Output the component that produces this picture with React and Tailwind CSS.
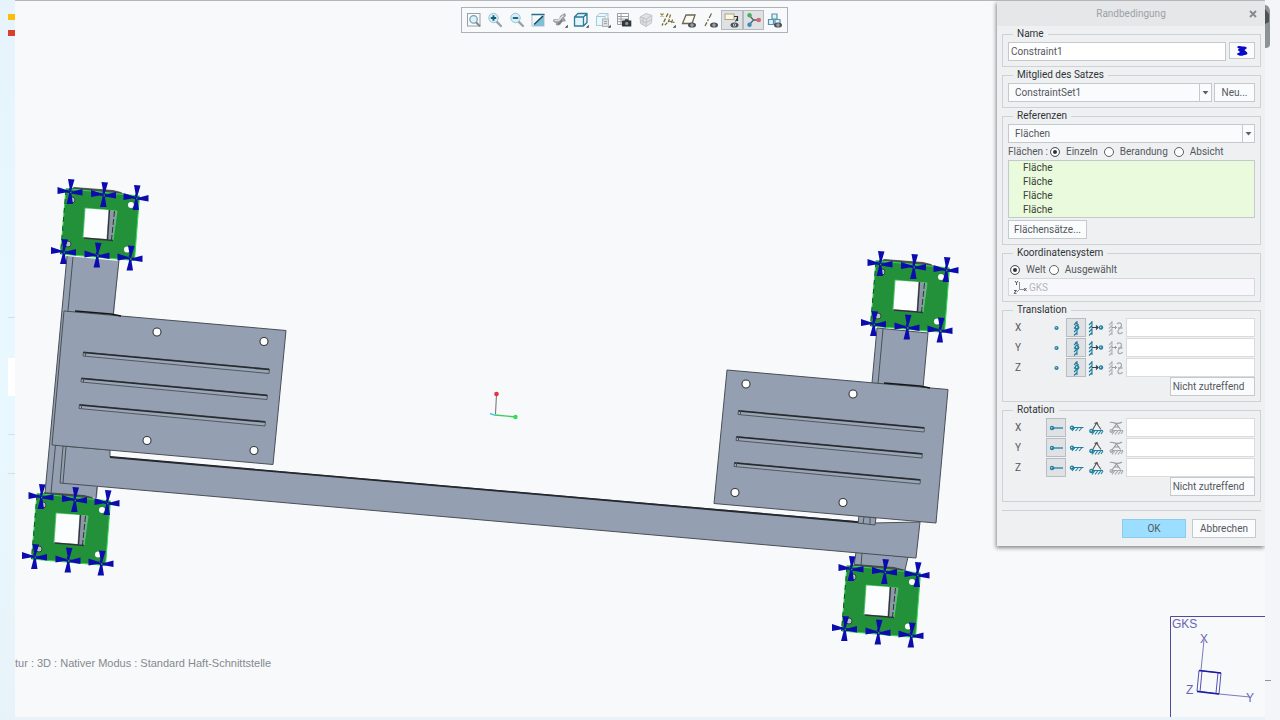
import React from "react";

const TEAL = "#1f7f9f";
const STEEL = "#5b6b78";

/* ---------- toolbar icons (16x16) ---------- */

const Eye = ({ x = 7, y = 10 }) => (
  <g transform={`translate(${x} ${y})`}>
    <ellipse cx="4" cy="3" rx="4" ry="2.6" fill="#4a5055" />
    <circle cx="4" cy="3" r="1.5" fill="#dfe5ea" />
    <circle cx="4" cy="3" r="0.7" fill="#222" />
  </g>
);

const Lens = ({ children }) => (
  <>
    <path d="M9.6 9.6 L14 14" stroke="#9aa3a8" strokeWidth="2.4" strokeLinecap="round" />
    <circle cx="6.5" cy="6" r="4.7" fill="#d9eff8" stroke="#9cc3d2" strokeWidth="1" />
    {children}
  </>
);

const TOOLS = [
  {
    name: "Refit",
    art: (
      <>
        <rect x="1.5" y="1.5" width="12.5" height="12.5" fill="#fafbfc" stroke="#9a9fa4" />
        <path d="M9.8 10 L14 14.4" stroke="#7d878d" strokeWidth="2" />
        <circle cx="7.6" cy="7.4" r="3.7" fill="#dff1f8" stroke="#6f9fb3" strokeWidth="1.2" />
      </>
    ),
  },
  {
    name: "Zoom in",
    art: (
      <Lens>
        <path d="M3.8 6H9.2M6.5 3.3V8.7" stroke="#14607f" strokeWidth="1.9" />
      </Lens>
    ),
  },
  {
    name: "Zoom out",
    art: (
      <Lens>
        <path d="M3.8 6H9.2" stroke="#14607f" strokeWidth="1.9" />
      </Lens>
    ),
  },
  {
    name: "Repaint",
    art: (
      <>
        <rect x="2" y="2.5" width="12" height="11.5" fill="#f4fbfd" stroke="#a5c6d3" />
        <path d="M14 3.5 V14 H3 Z" fill="#7fc0d8" />
        <path d="M1.500 2.500H14.500" stroke="#2b6d88" strokeWidth="1.500" />
        <path d="M4 12.500 L13 4" stroke="#1b4456" strokeWidth="1.500" />
      </>
    ),
  },
  {
    name: "Rendering options",
    more: true,
    art: (
      <>
        <path
          d="M1 8 C2.500 6.200 5 7.500 6.500 7 C8 6.500 7.300 4.300 9 3.200 L13 1 L14 4 L12 5.500 L14 9 C12 9.800 10.800 9.200 10 10.300 C8.800 12.800 6.500 14.300 4.500 13.300 C3 12.500 4.700 11 3.300 10.700 C2 10.500 1 9.800 1 8 Z"
          fill="#9a9ea1"
        />
        <path d="M2.500 8.300 C4.500 8.800 7.500 9 8.800 6 L11.500 3.500" stroke="#dfe1e3" strokeWidth="1.500" fill="none" />
        <path d="M6 12.500 C8 11.500 8.500 9.500 10 8.500" stroke="#707579" strokeWidth="1.300" fill="none" />
      </>
    ),
  },
  {
    name: "Display style",
    more: true,
    art: (
      <path
        d="M1.500 5 H10.500 V14 H1.500 Z M1.500 5 L5 1.500 H14 L10.500 5 M14 1.500 V10.500 L10.500 14"
        fill="#e3f4fb"
        stroke="#2c7c99"
        strokeWidth="1.300"
        strokeLinejoin="round"
      />
    ),
  },
  {
    name: "Saved orientations",
    more: true,
    art: (
      <>
        <path d="M1.500 4.500 H10 V13.500 H1.500 Z M1.500 4.500 L4.500 1.500 H13 L10 4.500 M13 1.500 V8" fill="#edf8fc" stroke="#9fcbdc" />
        <rect x="7.500" y="7" width="6" height="7.500" fill="#dcdfe1" stroke="#b0b4b8" />
        <path d="M9 9.500H12M9 11.500H12" stroke="#a3a8ac" />
      </>
    ),
  },
  {
    name: "View manager",
    art: (
      <>
        <path d="M1.500 1.500 H12.500 V12.500 H1.500 Z M1.500 4.500H12.500M1.500 7H12.500M1.500 9.700H12.500M5 1.500V12.500" fill="#fff" stroke="#9a9fa3" />
        <path d="M6 8.500H8.500L9.300 7.300H12L12.800 8.500H15.300V14.500H6Z" fill="#33383c" />
        <circle cx="10.700" cy="11.400" r="1.700" fill="#8a9197" />
      </>
    ),
  },
  {
    name: "Appearance",
    art: (
      <>
        <path d="M2 5 L8 1.500 L14 3.500 L13.500 11 L8 14.500 L2.500 11.500 Z" fill="#dfe1e3" stroke="#c3c6c9" />
        <path d="M2 5 L8.500 7 L14 3.500 M8.500 7 L8 14.500 M5 6V13 M2.300 8.500 L8 10.700 L13.700 7.500" stroke="#bfc3c6" fill="none" />
      </>
    ),
  },
  {
    name: "Datum display filters",
    more: true,
    art: (
      <>
        <path d="M0.500 1.500 L3.500 4.500 M3.500 1.500 L0.500 4.500" stroke="#9b8a2d" strokeWidth="1.200" />
        <path d="M8 1.500 L2 13.500" stroke="#6b6430" strokeWidth="1.300" strokeDasharray="4 1.500" />
        <path d="M10.500 2.500 L8.500 9.500 L4.500 13.500 M8.500 9 L14.500 10.500 M12.500 7.500 L11.500 12" stroke="#7a7132" strokeWidth="1.200" strokeDasharray="3.500 1" fill="none" />
      </>
    ),
  },
  {
    name: "Plane display",
    art: (
      <>
        <path d="M5 3 H14 L11 11.500 H1.500 Z" fill="#fbfaf3" stroke="#6f6552" strokeWidth="1.300" />
        <Eye />
      </>
    ),
  },
  {
    name: "Axis display",
    art: (
      <>
        <path d="M8.500 1.500 L2 14" stroke="#6f6840" strokeWidth="1.300" strokeDasharray="5 1.500 2 1.500" />
        <Eye />
      </>
    ),
  },
  {
    name: "Annotation display",
    on: true,
    art: (
      <>
        <rect x="1" y="2" width="9" height="5.500" fill="#fdf8dc" stroke="#a8a48c" />
        <path d="M10 4.500 H13.500 V9 M13.500 6 L11.500 9.500" stroke="#333" strokeWidth="1.200" fill="none" />
        <Eye x={6.5} />
      </>
    ),
  },
  {
    name: "Simulation display",
    on: true,
    art: (
      <>
        <path d="M3.500 3.500 L7.500 8 L3.500 12.500 M7.500 8 H13" stroke="#53636b" strokeWidth="1.300" fill="none" />
        <circle cx="3.500" cy="3.300" r="2.200" fill="#4dab62" />
        <circle cx="3.500" cy="12.700" r="2.200" fill="#3c8bb5" />
        <circle cx="12.700" cy="8" r="2.300" fill="#cf6b6b" />
      </>
    ),
  },
  {
    name: "Mesh display",
    art: (
      <>
        <path d="M5 2 H10 V7 H5 Z M1.500 7.500 H6.500 V12.500 H1.500 Z M8 7.500 H13 V12.500 H8 Z" fill="#dff0f7" stroke="#5692ab" strokeWidth="1.200" />
        <Eye />
      </>
    ),
  },
];

function Toolbar() {
  return (
    <div role="toolbar" aria-label="Grafik" className="flex h-[26px] w-[327px] items-center border border-[#aeb2b6] bg-[#f7f9fb] px-px">
      {TOOLS.map((t) => (
        <button
          key={t.name}
          type="button"
          aria-label={t.name}
          aria-pressed={!!t.on}
          className={`flex h-5 flex-1 items-center justify-center border ${
            t.on ? "border-[#b4b9bd] bg-[#dfe2e5]" : "border-transparent"
          }`}
        >
          <svg viewBox="0 0 16 16" className="size-4 shrink-0" fill="none">
            {t.art}
            {t.more && <path d="M15.800 12.800 V15.800 H12.800 Z" fill="#444" />}
          </svg>
        </button>
      ))}
    </div>
  );
}

/* ---------- constraint icons (16x16) ---------- */

const wall = "M3 1V15 M0 5L3 2 M0 8.500L3 5.500 M0 12L3 9 M0 15.500L3 12.500";
const ground = "M4 10.500H15 M4 14.500L7 10.500 M7 14.500L10 10.500 M10 14.500L13 10.500 M13 14L15 11";

const Ball = ({ x, y, r = 2, c = TEAL }) => (
  <>
    <circle cx={x} cy={y} r={r} fill={c} />
    <circle cx={x - 0.3} cy={y - 0.3} r={r * 0.35} fill="#c5e4ee" />
  </>
);

const TRANSLATION = [
  { name: "frei", art: <Ball x={8.5} y={8} r={2.1} /> },
  {
    name: "fest",
    art: (
      <>
        <path transform="translate(6 0)" d={wall} stroke={TEAL} strokeWidth="1.100" />
        <path d="M7 2.500L10.500 4.500L8 7" stroke={STEEL} />
        <Ball x={9} y={7.5} r={2.4} />
      </>
    ),
  },
  {
    name: "vorgeschrieben",
    art: (
      <>
        <path transform="translate(1 0)" d={wall} stroke={TEAL} strokeWidth="1.100" />
        <path d="M4 7.500H10 M8 5.500L10 7.500L8 9.500" stroke="#3a4146" strokeWidth="1.200" />
        <Ball x={13} y={7.5} r={2.2} />
      </>
    ),
  },
  {
    name: "Funktion",
    art: (
      <>
        <path transform="translate(1 0)" d={wall} stroke="#b0b4b7" strokeWidth="1.100" />
        <path d="M4 7.500H8.500 M7 6L8.500 7.500L7 9" stroke="#96999d" />
        <path d="M9 4C11 2 14 3 13.500 5.500C13 8 9.500 9 10 12C10.500 14.500 13.500 14 14.500 12M10 8H14.500" stroke="#a8acb0" strokeWidth="1.300" />
      </>
    ),
  },
];

const ROTATION = [
  {
    name: "frei",
    art: (
      <>
        <path d="M4 8H15" stroke={TEAL} strokeWidth="1.300" />
        <Ball x={4} y={8} r={2.2} />
      </>
    ),
  },
  {
    name: "fest",
    art: (
      <>
        <path d="M5 7.500H15.500 M4 11L7 7.500 M7.500 11L10.500 7.500 M11 11L14 7.500" stroke={TEAL} strokeWidth="1.100" />
        <Ball x={4} y={7.8} r={2.2} />
      </>
    ),
  },
  {
    name: "vorgeschrieben",
    art: (
      <>
        <path d={ground} stroke={TEAL} strokeWidth="1.100" />
        <path d="M4.500 10L8.500 3L13 9.500 M6.500 3.500L9 2.500L10 5" stroke="#5a5458" strokeWidth="1.100" />
        <Ball x={3.5} y={11} r={2.3} />
      </>
    ),
  },
  {
    name: "Funktion",
    art: (
      <>
        <path d={ground} stroke="#a4a8ac" strokeWidth="1.100" />
        <path d="M4 10L8.500 4L12.500 9.500 M2 2.500C6 1 8 6 14 2 M6 7H11" stroke="#989ca0" strokeWidth="1.200" />
        <Ball x={3.5} y={11} r={2} c="#a4a8ac" />
      </>
    ),
  },
];

/* ---------- dialog ---------- */

const control = "border border-[#c6c9cc] bg-[#fafbfc]";

function Group({ title, children }) {
  return (
    <fieldset className="min-w-0 border border-[#cfd2d5] px-[5px] pb-[5px]">
      <legend className="ml-[5px] h-4 px-1 leading-4 text-[#303438]">{title}</legend>
      {children}
    </fieldset>
  );
}

function Dropdown({ label, value }) {
  return (
    <div className={`flex h-[19px] min-w-0 flex-1 ${control}`}>
      <select aria-label={label} defaultValue={value} className="min-w-0 flex-1 appearance-none bg-transparent pl-[6px] leading-4 outline-none">
        <option>{value}</option>
      </select>
      <span className="flex w-3 items-center justify-center border-l border-[#c6c9cc]">
        <svg viewBox="0 0 7 4" className="h-1 w-[7px]">
          <path d="M0.500 0H6.500L3.500 3.500Z" fill="#5d6165" />
        </svg>
      </span>
    </div>
  );
}

function Radio({ name, label, checked }) {
  return (
    <label className="flex items-center gap-[6px]">
      <input
        type="radio"
        name={name}
        defaultChecked={checked}
        className="size-[10px] appearance-none rounded-full border border-[#5c6064] bg-white checked:bg-[#2e3236] checked:shadow-[inset_0_0_0_2px_#ffffff]"
      />
      {label}
    </label>
  );
}

function Push({ children, className = "", ...rest }) {
  return (
    <button type="button" className={`flex h-[19px] items-center justify-center whitespace-nowrap ${control} ${className}`} {...rest}>
      {children}
    </button>
  );
}

function Motion({ title, options, active }) {
  return (
    <Group title={title}>
      <div className="grid gap-px">
        {["X", "Y", "Z"].map((axis) => {
          const id = `${title}-${axis}`;
          return (
            <div key={axis} className="grid h-[19px] grid-cols-[38px_20px_20px_20px_20px_1fr]">
              <label htmlFor={id} className="pl-[7px] leading-[19px]">
                {axis}
              </label>
              {options.map((o, i) => (
                <button
                  key={o.name}
                  type="button"
                  aria-label={`${axis} ${o.name}`}
                  aria-pressed={i === active}
                  className={`flex items-center justify-center border ${i === active ? "border-[#b9bdc1] bg-[#dfe2e5]" : "border-transparent"}`}
                >
                  <svg viewBox="0 0 16 16" className="size-4 shrink-0" fill="none">
                    {o.art}
                  </svg>
                </button>
              ))}
              <input id={id} type="text" className="min-w-0 border border-[#d9dbdd] bg-white px-1 outline-none" />
            </div>
          );
        })}
      </div>
      <Push className="ml-auto w-[85px] pr-2">Nicht zutreffend</Push>
    </Group>
  );
}

function Dialog() {
  return (
    <section
      role="dialog"
      aria-label="Randbedingung"
      className="w-[268px] shrink-0 self-start bg-[#eef0f2] pb-2 text-[10px] text-[#54585c] shadow-[-1px_2px_4px_rgba(0,0,0,0.45)]"
    >
      <header className="flex h-[25px] items-center bg-[#e5e7e9] pr-2 pl-4 text-[#9da1a4]">
        <h1 className="flex-1 text-center">Randbedingung</h1>
        <button type="button" aria-label="Schließen">
          <svg viewBox="0 0 8 8" className="size-[8px]">
            <path d="M1 1L7 7M7 1L1 7" stroke="#85898c" strokeWidth="1.800" />
          </svg>
        </button>
      </header>
      <form className="pr-1 pl-[5px]" onSubmit={(e) => e.preventDefault()}>
        <Group title="Name">
          <div className="flex gap-[3px]">
            <input aria-label="Name" defaultValue="Constraint1" className="h-[19px] min-w-0 flex-1 border border-[#c6c9cc] bg-white px-[2px] outline-none" />
            <button type="button" aria-label="Farbe" className={`flex h-[17px] w-[26px] items-center justify-center ${control}`}>
              <svg viewBox="0 0 12 12" className="size-3">
                <path d="M1.500 1.500C3.500 .5 5 1.300 6.500 1.500C8.500 1.500 10.500 1.800 10.800 2.800C11 4 9 4.300 8.500 5C9 6 11.500 7 11.500 8.500C11.300 10 9 9.500 7.500 10.300C5.500 11.300 2 10.700 1 9.300C.8 8 3.500 8 4 7C3.500 6 2 5.800 2 4.700C2.500 3.700 3.500 4.300 3.500 3.600C2.500 3.200 .7 3 1.500 1.500Z" fill="#0909c8" />
              </svg>
            </button>
          </div>
        </Group>
        <Group title="Mitglied des Satzes">
          <div className="flex gap-[2px]">
            <Dropdown label="Mitglied des Satzes" value="ConstraintSet1" />
            <Push className="w-[41px]">Neu...</Push>
          </div>
        </Group>
        <Group title="Referenzen">
          <div className="flex">
            <Dropdown label="Referenzen" value="Flächen" />
          </div>
          <div className="flex h-[17px] items-center">
            <span className="w-[42px]">Flächen :</span>
            <div className="flex gap-[6px]">
              <Radio name="ref" label="Einzeln" checked />
              <Radio name="ref" label="Berandung" />
              <Radio name="ref" label="Absicht" />
            </div>
          </div>
          <ul className="mb-[2px] h-[58px] overflow-hidden border border-[#c6c9cc] bg-[#e9fbdc] pl-[14px] leading-[14px] text-[#3b4034]">
            <li>Fläche</li>
            <li>Fläche</li>
            <li>Fläche</li>
            <li>Fläche</li>
          </ul>
          <Push className="w-[79px]">Flächensätze...</Push>
        </Group>
        <Group title="Koordinatensystem">
          <div className="flex h-[17px] items-center gap-[3px] pl-[2px]">
            <Radio name="csys" label="Welt" checked />
            <Radio name="csys" label="Ausgewählt" />
          </div>
          <div className="flex h-[18px] items-center border border-[#d5d7da] bg-[#f8f8fc] pl-1">
            <svg viewBox="0 0 14 14" className="size-[14px]" fill="none" stroke="#55595d">
              <path d="M6.500 2V9.500H11M6.500 9.500L4 12" stroke="#8b8f93" />
              <path d="M2 1L3.500 3L5 1M3.500 3V5M11 8L13.500 11M13.500 8L11 11M1 10.500H3.500L1 13.300H3.500" />
            </svg>
            <input aria-label="Koordinatensystem" disabled defaultValue="GKS" className="min-w-0 flex-1 bg-transparent pl-[2px] text-[#b3b6ba]" />
          </div>
        </Group>
        <Motion title="Translation" options={TRANSLATION} active={1} />
        <Motion title="Rotation" options={ROTATION} active={0} />
        <footer className="mt-2 flex justify-end gap-[6px] border-t border-[#cfd2d5] pt-2 pr-[5px]">
          <button type="submit" className="h-[19px] w-16 border border-[#8ccbea] bg-[#9bdeff]">
            OK
          </button>
          <Push className="w-16">Abbrechen</Push>
        </footer>
      </form>
    </section>
  );
}

/* ---------- model ---------- */

const BODY = "#94a0b1";
const EDGE = "#4a4f56";

const PIN_POINTS = [
  [70, 191.5],
  [103.5, 194.5],
  [136, 197.5],
  [63.5, 251.5],
  [97, 255],
  [130, 258],
];

const Pin = ({ x, y }) => (
  <path
    transform={`translate(${x} ${y})`}
    d="M-2 -12.500L4.500 -12L2 -3.500L1 0H-1.500L-.5 -4Z M-12.500 -4.500L-12.500 2.500L-4 1L0 1.500V-1L-3.500 -1.500Z M12.500 -2.500L12.500 4L4 2.500L-1 1.500V-.5L4 -.3Z M-3.500 12.500L3 12.500L1.500 3V0H-1V3Z"
    fill="#0c0cae"
  />
);

const Plate = ({ dx = 0, dy = 0 }) => (
  <g transform={`translate(${dx} ${dy})`}>
    <path d="M74 187.500L113 190.500L121 192.500L124 195L70 190Z" fill="#4a5350" stroke="#333" strokeWidth="0.700" />
    <path d="M66 188.500L139.500 196L134.500 260.500L60.500 254Z" fill="#23903a" stroke="#35d857" />
    <path d="M66 190L60.500 254" stroke="#164d25" strokeDasharray="5 4" />
    <path d="M85 208L117 211L113 240.500L83 238Z" fill="#8d98a7" stroke="#4bd568" strokeWidth="0.800" />
    <path d="M85.500 208.500L108.500 210L106.500 239L83.500 237.500Z" fill="#fcfdff" />
    <path d="M109.500 210L107.500 240M83.500 238L113 240.500" stroke="#2e3338" strokeWidth="1.300" />
    <path d="M114.500 211L111.500 240" stroke="#2e3338" strokeDasharray="6 2" />
    {[
      [72, 200],
      [131, 205],
      [68, 244],
      [127, 249.5],
    ].map(([cx, cy]) => (
      <circle key={cx} cx={cx} cy={cy} r="3" fill={cx < 80 ? "#b5bfc6" : "#fff"} stroke={cx < 80 ? "#2b4a35" : "none"} />
    ))}
    {PIN_POINTS.map(([x, y]) => (
      <Pin key={x} x={x} y={y} />
    ))}
  </g>
);

const Slot = ({ x, y }) => (
  <g transform={`translate(${x} ${y})`}>
    <path d="M0.500 0L186.500 17L186 21.500L0 4Z" fill="#9aa6b6" stroke={EDGE} strokeWidth="0.900" />
    <path d="M0.500 0.500L186 17.500" stroke="#25282c" strokeWidth="1.500" />
    <path d="M2.500 0.500V4" stroke={EDGE} />
  </g>
);

const SLOTS = [
  [83, 352],
  [81, 378],
  [79, 404.5],
  [738, 410.5],
  [736, 436.5],
  [734, 462.5],
];

const HOLES = [
  [157, 332],
  [264, 341.5],
  [147, 440.5],
  [254, 450.5],
  [746, 384],
  [853, 394],
  [735, 492.5],
  [843, 502.5],
];

function Scene() {
  return (
    <svg aria-label="Modell" role="img" className="absolute inset-0 h-full w-full" fill="none">
      <g transform="translate(-15 -1)">
        <g fill={BODY} stroke={EDGE}>
          <path d="M67 256L119 261L97 498L45 492Z" stroke="none" />
          <path d="M67 256L45 493M73 257L51 493M119 260L113 316M97 487L96 498" fill="none" />
          <path d="M877 328L928 333L923 388L872 383Z" />
          <path d="M883 329L878 384" />
          <path d="M856 552L908 557L905 570L854 566Z" />
          <path d="M862 553L861 566" />
          <path d="M63 446L110 450L110 457L873 523L920 522L916 558L60 483Z" />
          <path d="M66 447L63 483" />
          <path d="M110 457L873 523.500" stroke="#25282c" strokeWidth="1.800" />
          <path d="M859 516L876 518L875 525L858 523Z" />
          <path d="M864 517L863 524M870 517L870 524" />
          <path d="M64 311L286 330.500L273 464.500L52 445Z" />
          <path d="M727 370L948 389.500L936 523L714 503.500Z" />
        </g>
        <path d="M75 311L111 314L121 316" stroke="#15181b" strokeWidth="1.300" />
        <path d="M884 383L920 386L930 388" stroke="#15181b" strokeWidth="1.300" />
        {SLOTS.map(([x, y]) => (
          <Slot key={`${x}-${y}`} x={x} y={y} />
        ))}
        {HOLES.map(([x, y]) => (
          <circle key={`${x}-${y}`} cx={x} cy={y} r="4" fill="#fff" stroke="#33383d" strokeWidth="1.100" />
        ))}
        <Plate />
        <Plate dx={-29} dy={305} />
        <Plate dx={810} dy={72} />
        <Plate dx={781} dy={377} />

        <path d="M496.500 394L495.500 414" stroke="#7d6a6c" />
        <path d="M495 415L516 417" stroke="#45c968" strokeWidth="1.300" />
        <path d="M490 413.500L496 415.500" stroke="#46cfd8" strokeWidth="1.600" />
        <circle cx="496.500" cy="394" r="2.300" fill="#e03440" />
        <circle cx="515.500" cy="417" r="2.200" fill="#35dd57" />
      </g>
    </svg>
  );
}

function Triad() {
  return (
    <svg viewBox="0 0 95 101" role="img" aria-label="GKS" className="absolute right-0 bottom-0 h-[101px] w-[95px]" fill="none">
      <path d="M0.500 101V0.500H95" stroke="#4d4c96" />
      <g fill="#6a66b4" fontFamily="Liberation Sans, Arial, sans-serif" fontSize="12">
        <text x="2" y="12">GKS</text>
        <text x="30" y="27">X</text>
        <text x="76" y="86">Y</text>
        <text x="16" y="78">Z</text>
      </g>
      <path d="M34 24L31 54M49 78L80 81" stroke="#7c79bd" />
      <path d="M29 54.500L51 57L49 78L27 75Z M32 55L30 76 M48 57L46 77" stroke="#5451b4" />
      <path d="M29 54.500L51 57M27 75.500L49 78" stroke="#1c1ca2" strokeWidth="1.600" />
    </svg>
  );
}

export default function App() {
  return (
    <div className="flex min-h-screen bg-[#eaf3f9] font-[Roboto,'Open_Sans',sans-serif]">
      <aside className="w-[15px] shrink-0 bg-linear-to-b from-[#e6f3fa] via-[#e9f8ff] to-[#e8f3f9]">
        <svg className="h-full w-full" aria-hidden="true">
          <rect x="8" y="14" width="7" height="6" fill="#fbbc0d" />
          <rect x="8" y="30" width="7" height="6" fill="#d9402c" />
          <rect x="8" y="358" width="7" height="38" fill="#fff" />
          <path d="M8 317.500H15M8 434.500H15M8 473.500H15" stroke="#d3e0e8" />
        </svg>
      </aside>

      <main className="relative mb-[3px] flex min-w-0 flex-1 overflow-hidden border-t border-[#b4b7ba] bg-[#f7f9fb]">
        <Scene />
        <Triad />
        <div className="relative flex min-w-0 flex-1 flex-col justify-between">
          <div className="flex justify-end pt-[6px] pr-[209px]">
            <Toolbar />
          </div>
          <p className="mb-[47px] font-['Liberation_Sans',Arial,sans-serif] text-[11px] leading-[14px] text-[#85898d]">
            tur : 3D : Nativer Modus : Standard Haft-Schnittstelle
          </p>
        </div>
        <div className="relative flex items-start">
          <Dialog />
        </div>
      </main>

      <aside className="w-[15px] shrink-0 bg-[#f3f5f9]">
        <svg className="h-full w-full" aria-hidden="true">
          <path d="M0 5C3 5 5 8 5 12V44C5 47 3 48 0 48Z" fill="#8f9294" />
          <path d="M0 9L4 14V22L0 24Z" fill="#4f5254" />
          <path d="M0 680.500H6" stroke="#8f9398" />
        </svg>
      </aside>
    </div>
  );
}
